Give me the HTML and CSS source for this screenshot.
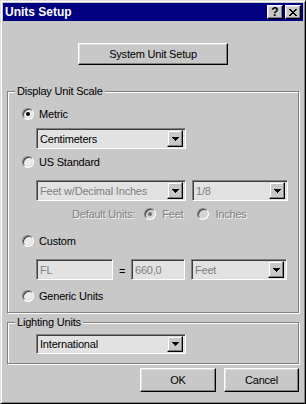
FILE: index.html
```html
<!DOCTYPE html>
<html lang="en">
<head>
    <meta charset="UTF-8">
    <title>Units Setup</title>
    <link rel="stylesheet" href="styles.css">
</head>
<body>
    <div class="window">
        <div class="titlebar">
            <span class="title">Units Setup</span>
            <div class="title-buttons">
                <span class="tbtn">?</span>
                <span class="tbtn">
                    <svg width="8" height="7" viewBox="0 0 8 7"><path d="M0 0h2v1h-2zM6 0h2v1h-2zM1 1h2v1h-2zM5 1h2v1h-2zM2 2h4v1h-4zM3 3h2v1h-2zM2 4h4v1h-4zM1 5h2v1h-2zM5 5h2v1h-2zM0 6h2v1h-2zM6 6h2v1h-2z"/></svg>
                </span>
            </div>
        </div>

        <div class="content">
            <button class="btn system-btn">System Unit Setup</button>

            <fieldset class="group scale-group">
                <legend>Display Unit Scale</legend>

                <div class="row opt metric-row"><span class="radio on"></span>Metric</div>

                <div class="field combo cm-combo">
                    <span class="field-text">Centimeters</span>
                    <span class="arrow-btn"><svg width="7" height="4" viewBox="0 0 7 4"><path d="M0 0H7V1H6V2H5V3H4V4H3V3H2V2H1V1H0Z"/></svg></span>
                </div>

                <div class="row opt us-row"><span class="radio"></span>US Standard</div>

                <div class="row field-row feet-row">
                    <div class="field combo wide-combo disabled">
                        <span class="field-text">Feet w/Decimal Inches</span>
                        <span class="arrow-btn"><svg width="7" height="4" viewBox="0 0 7 4"><path d="M0 0H7V1H6V2H5V3H4V4H3V3H2V2H1V1H0Z"/></svg></span>
                    </div>
                    <div class="field combo small-combo disabled">
                        <span class="field-text">1/8</span>
                        <span class="arrow-btn"><svg width="7" height="4" viewBox="0 0 7 4"><path d="M0 0H7V1H6V2H5V3H4V4H3V3H2V2H1V1H0Z"/></svg></span>
                    </div>
                </div>

                <div class="row default-row dim">
                    <span class="default-label">Default Units:</span>
                    <span class="sub-opt"><span class="radio on off"></span>Feet</span>
                    <span class="sub-opt"><span class="radio off"></span>Inches</span>
                </div>

                <div class="row opt custom-row"><span class="radio"></span>Custom</div>

                <div class="row field-row custom-fields">
                    <div class="field text-box fl-box disabled"><span class="field-text">FL</span></div>
                    <span class="equals">=</span>
                    <div class="field text-box num-box disabled"><span class="field-text">660,0</span></div>
                    <div class="field combo small-combo disabled">
                        <span class="field-text">Feet</span>
                        <span class="arrow-btn"><svg width="7" height="4" viewBox="0 0 7 4"><path d="M0 0H7V1H6V2H5V3H4V4H3V3H2V2H1V1H0Z"/></svg></span>
                    </div>
                </div>

                <div class="row opt generic-row"><span class="radio"></span>Generic Units</div>
            </fieldset>

            <fieldset class="group light-group">
                <legend>Lighting Units</legend>
                <div class="field combo cm-combo light-combo">
                    <span class="field-text">International</span>
                    <span class="arrow-btn"><svg width="7" height="4" viewBox="0 0 7 4"><path d="M0 0H7V1H6V2H5V3H4V4H3V3H2V2H1V1H0Z"/></svg></span>
                </div>
            </fieldset>

            <div class="button-row">
                <button class="btn ok-btn">OK</button>
                <button class="btn cancel-btn">Cancel</button>
            </div>
        </div>
    </div>
</body>
</html>
```

FILE: styles.css
```css
body {
    margin: 0;
    background-color: #c8c8c8;
    font-family: "Liberation Sans", Arial, sans-serif;
    font-size: 11px;
    letter-spacing: -0.2px;
    color: #000000;
}

.window {
    width: 306px;
    height: 404px;
    box-sizing: border-box;
    border: 1px solid;
    border-color: #dfdfdf #000000 #000000 #dfdfdf;
    box-shadow: inset 1px 1px #ffffff, inset -1px -1px #808080;
    padding: 2px;
    background-color: #c8c8c8;
    display: flex;
    flex-direction: column;
}

/* title bar */
.titlebar {
    height: 18px;
    flex: none;
    background-color: #000080;
    display: flex;
    align-items: center;
    justify-content: space-between;
    padding: 0 2px;
}

.title {
    color: #ffffff;
    font-weight: bold;
    font-size: 12px;
    letter-spacing: 0;
}

.title-buttons {
    display: flex;
    gap: 2px;
}

.tbtn {
    width: 16px;
    height: 14px;
    box-sizing: border-box;
    background-color: #c8c8c8;
    border: 1px solid;
    border-color: #ffffff #000000 #000000 #ffffff;
    box-shadow: inset -1px -1px #808080, inset 1px 1px #dfdfdf;
    display: flex;
    align-items: center;
    justify-content: center;
    font-weight: bold;
    font-size: 12px;
    line-height: 1;
    letter-spacing: 0;
}

/* dialog body */
.content {
    padding: 22px 4px 0;
    display: flex;
    flex-direction: column;
}

.btn {
    font: inherit;
    letter-spacing: inherit;
    color: #000000;
    background-color: #c8c8c8;
    border: 1px solid;
    border-color: #ffffff #000000 #000000 #ffffff;
    box-shadow: inset -1px -1px #808080, inset 1px 1px #dfdfdf;
    padding: 0;
    box-sizing: border-box;
}

.system-btn {
    width: 150px;
    height: 22px;
    align-self: center;
}

.group {
    margin: 0;
    padding: 0 0 8px;
    border: 1px solid #808080;
    box-shadow: inset 1px 1px #ffffff, 1px 1px #ffffff;
    min-width: 0;
}

.group legend {
    margin-left: 7px;
    padding: 0 2px;
    line-height: 14px;
    background-color: #c8c8c8;
}

.scale-group {
    margin-top: 19px;
}

.light-group {
    margin-top: 2px;
    padding-bottom: 9px;
}

.row {
    display: flex;
    align-items: center;
    height: 16px;
}

.opt {
    margin-left: 14px;
    gap: 5px;
}

.metric-row { margin-top: 8px; }
.us-row { margin-top: 5px; }
.feet-row { margin-top: 10px; }
.default-row { margin-top: 5px; }
.custom-row { margin-top: 11px; }
.custom-fields { margin-top: 10px; }
.generic-row { margin-top: 8px; }

/* radios */
.radio {
    width: 12px;
    height: 12px;
    flex: none;
    box-sizing: border-box;
    border-radius: 50%;
    border: 1px solid;
    border-color: #808080 #ffffff #ffffff #808080;
    box-shadow: inset 1px 1px #404040, inset -1px -1px #dfdfdf;
    background-color: #ececec;
    display: flex;
    align-items: center;
    justify-content: center;
}

.radio.on::after {
    content: "";
    width: 4px;
    height: 4px;
    border-radius: 50%;
    background-color: #000000;
}

.radio.off {
    background-color: #d4d4d4;
}

.radio.off.on::after {
    background-color: #707070;
}

/* edit fields and combos */
.field {
    height: 21px;
    box-sizing: border-box;
    border: 1px solid;
    border-color: #808080 #ffffff #ffffff #808080;
    box-shadow: inset 1px 1px #404040, inset -1px -1px #dfdfdf;
    background-color: #e2e2e2;
    padding: 2px;
    display: flex;
    align-items: center;
}

.field-text {
    flex: 1;
    padding-left: 1px;
    white-space: nowrap;
    overflow: hidden;
}

.field.disabled .field-text {
    color: #808080;
}

.arrow-btn {
    width: 16px;
    height: 17px;
    flex: none;
    box-sizing: border-box;
    background-color: #c8c8c8;
    border: 1px solid;
    border-color: #dfdfdf #000000 #000000 #dfdfdf;
    box-shadow: inset -1px -1px #808080, inset 1px 1px #ffffff;
    display: flex;
    align-items: center;
    justify-content: center;
}

.arrow-btn svg {
    display: block;
}

.cm-combo {
    width: 150px;
    margin-left: 28px;
    margin-top: 6px;
}

.light-combo {
    height: 20px;
    margin-top: 5px;
}

.light-combo .arrow-btn {
    height: 16px;
}

.field-row {
    height: 21px;
    margin-left: 28px;
}

.wide-combo {
    width: 150px;
}

.small-combo {
    width: 96px;
    margin-left: 6px;
}

.fl-box {
    width: 77px;
}

.num-box {
    width: 54px;
}

.equals {
    width: 18px;
    text-align: center;
    padding-top: 3px;
}

/* disabled "Default Units" line */
.dim {
    color: #808080;
    text-shadow: 1px 1px 0 #f4f4f4;
}

.default-label {
    margin-left: 64px;
    margin-right: 9px;
}

.sub-opt {
    display: flex;
    align-items: center;
    gap: 6px;
    margin-right: 14px;
}

.button-row {
    display: flex;
    justify-content: flex-end;
    gap: 8px;
    margin-top: 4px;
}

.ok-btn {
    width: 76px;
    height: 24px;
}

.cancel-btn {
    width: 75px;
    height: 24px;
}
```
